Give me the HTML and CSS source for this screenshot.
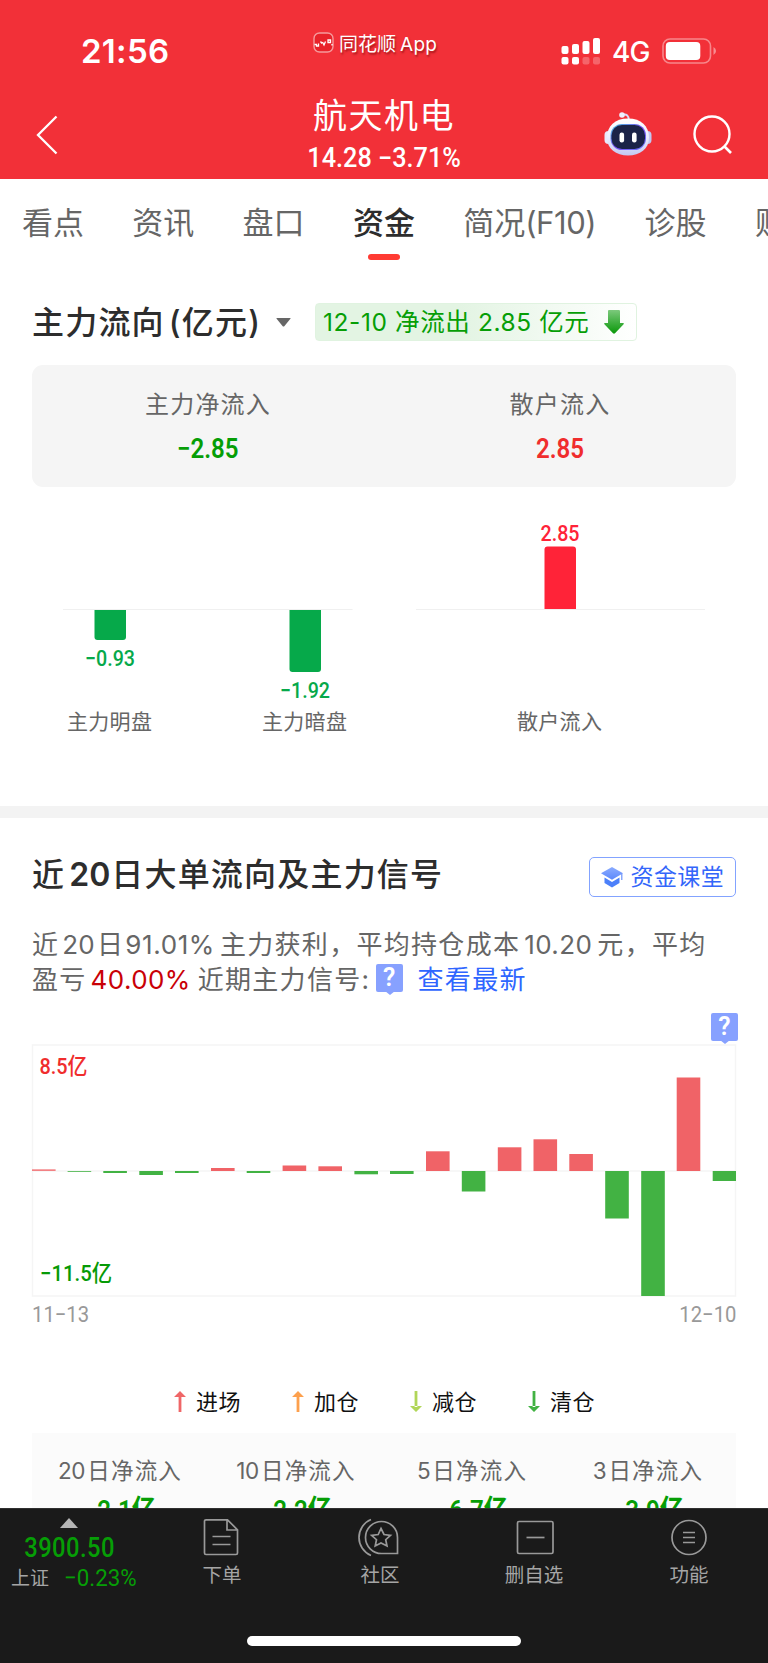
FILE: index.html
```html
<!DOCTYPE html>
<html lang="zh-CN">
<head>
<meta charset="utf-8">
<title>航天机电 资金</title>
<link rel="stylesheet" href="styles.css">
</head>
<body>
<div class="screen">
  <header class="top">
    <div class="status">
      <span class="time">21:56</span>
      <span class="brand">
        <svg class="brand-icon" viewBox="0 0 21 21"><rect x="1" y="1" width="19" height="19" rx="5.5" fill="#e8222a" stroke="#f59a9c" stroke-width="1.4"/><path d="M1.500 12.500h2v1.500h2v-2.500M7.500 9.500l1.500 2M9.500 10l1.500 3 1.500-3.500M15 8h2.500v2.500H15zM19 12v1.500" fill="none" stroke="#fff" stroke-width="1.300"/></svg>
        <span class="brand-text">同花顺</span><span class="brand-app">App</span>
      </span>
      <span class="signals">
        <svg class="bars" viewBox="0 0 39 28" fill="#fff"><rect x="0.500" y="9" width="7" height="8" rx="2"/><rect x="11" y="7" width="7" height="10" rx="2"/><rect x="21.500" y="4" width="7" height="13" rx="2"/><rect x="32" y="1" width="7" height="16" rx="2"/><rect x="0.500" y="20" width="7" height="7.500" rx="2"/><rect x="11" y="20" width="7" height="7.500" rx="2"/><rect x="21.500" y="20" width="7" height="7.500" rx="2" opacity=".25"/><rect x="32" y="20" width="7" height="7.500" rx="2" opacity=".25"/></svg>
        <span class="net">4G</span>
        <svg class="battery" viewBox="0 0 55 26"><rect x="1" y="1" width="47.500" height="24" rx="7" fill="none" stroke="#fff" stroke-opacity=".42" stroke-width="1.600"/><rect x="3.800" y="4" width="34.500" height="18" rx="4" fill="#fff"/><path d="M51.500 9q2.500 1.500 2.500 4t-2.500 4z" fill="#fff" opacity=".45"/></svg>
      </span>
    </div>
    <div class="nav">
      <svg class="back" viewBox="0 0 22 42"><path d="M20.500 2.500 2 21l18.500 18.500" fill="none" stroke="#fff" stroke-width="2.300"/></svg>
      <div class="stock">
        <h1>航天机电</h1>
        <p><span class="din quote">14.28&nbsp;−3.71%</span></p>
      </div>
      <svg class="robot" viewBox="0 0 48 46"><defs><linearGradient id="shell" x1="0" y1="0" x2="0" y2="1"><stop offset="0" stop-color="#fff"/><stop offset=".5" stop-color="#eceefd"/><stop offset="1" stop-color="#c3c7f2"/></linearGradient><linearGradient id="rim" x1="0" y1="0" x2="1" y2="1"><stop offset="0" stop-color="#46c7de"/><stop offset=".5" stop-color="#7a4df0"/><stop offset="1" stop-color="#6b7af8"/></linearGradient></defs><path d="M18 4q7-2 7 6" fill="none" stroke="#d9dcf8" stroke-width="2"/><circle cx="18" cy="4" r="2.800" fill="#eef0ff"/><rect x=".5" y="20" width="8" height="13" rx="4" fill="#e8e9fb"/><rect x="39.500" y="20" width="8" height="13" rx="4" fill="#c3c7f2"/><path d="M24 7.500C37 7.500 45 15 45 26.500S36 44.500 24 44.500 3 38 3 26.500 11 7.500 24 7.500z" fill="url(#shell)"/><rect x="6.500" y="13" width="35.500" height="26" rx="11.500" fill="url(#rim)"/><rect x="7.500" y="14" width="33.500" height="24" rx="10.500" fill="#1b2348"/><rect x="15.500" y="21.500" width="4.600" height="10" rx="2.200" fill="#fff"/><rect x="28" y="21.500" width="4.600" height="10" rx="2.200" fill="#fff"/></svg>
      <svg class="search" viewBox="0 0 40 40"><circle cx="19" cy="20" r="17.500" fill="none" stroke="#fff" stroke-width="2.400"/><path d="m31 32 7 7" stroke="#fff" stroke-width="2.600"/></svg>
    </div>
  </header>

  <nav class="tabs">
    <span>看点</span><span>资讯</span><span>盘口</span><span class="on">资金</span><span>简况<i>(F10)</i></span><span>诊股</span><span>财务</span>
  </nav>

  <section class="flow">
    <div class="flow-head">
      <h2>主力流向<span class="unit">(亿元)</span></h2>
      <svg class="caret" viewBox="0 0 15 9"><path d="M1 0h13q1 0 .4.8L8.500 8q-1 1-2 0L.6.8Q0 0 1 0z" fill="#666"/></svg>
      <div class="badge"><span class="badge-text">12-10 净流出 2.85 亿元</span>
        <svg viewBox="0 0 20 24"><defs><linearGradient id="down" x1="0" y1="0" x2="0" y2="1"><stop offset="0" stop-color="#7cc97c"/><stop offset="1" stop-color="#0a980a"/></linearGradient></defs><path d="M5 0h10q1 0 1 1v12h3q1.500 0 .6 1.200L11 23.200q-1 .9-2 0L.4 14.200Q-.5 13 1 13h3V1q0-1 1-1z" fill="url(#down)"/></svg>
      </div>
    </div>
    <div class="summary">
      <div><span class="label">主力净流入</span><span class="din value green">−2.85</span></div>
      <div><span class="label">散户流入</span><span class="din value red">2.85</span></div>
    </div>
    <svg class="split-chart" viewBox="0 0 704 319">
      <path d="M31 122.500h289.500M384 122.500h289" stroke="#f0f0f0" stroke-width="1.200"/>
      <g fill="#06a94a">
        <path d="M62.500 123h31.500v27q0 3-3 3h-25.500q-3 0-3-3z"/>
        <path d="M257.500 123h31.500v59q0 3-3 3h-25.500q-3 0-3-3z"/>
        <g class="chart-num"><text x="53" y="179" textLength="50" lengthAdjust="spacingAndGlyphs">−0.93</text><text x="248" y="211" textLength="50" lengthAdjust="spacingAndGlyphs">−1.92</text></g>
      </g>
      <g fill="#ff2338">
        <path d="M512.500 122v-59.500q0-3 3-3h25.500q3 0 3 3v59.500z"/>
        <text class="chart-num" x="508.500" y="53.500" textLength="39" lengthAdjust="spacingAndGlyphs">2.85</text>
      </g>
      <g class="chart-name" fill="#666"><text x="35" y="242">主力明盘</text><text x="230" y="242">主力暗盘</text><text x="485" y="242">散户流入</text></g>
    </svg>
  </section>

  <section class="trend">
    <div class="trend-head">
      <h2>近<b>20</b>日大单流向及主力信号</h2>
      <a class="course"><svg viewBox="0 0 22 21"><defs><linearGradient id="cap" x1="0" y1="0" x2="0" y2="1"><stop offset="0" stop-color="#8aabff"/><stop offset="1" stop-color="#5c88fb"/></linearGradient></defs><path d="M11 0 22 6.300 11 12.800 0 6.300z" fill="url(#cap)"/><path d="M3.500 10.500 11 15l7.500-4.500v5.500L11 20.500 3.500 16z" fill="#4c80fa"/><path d="M20.800 6.500v6.500" stroke="#6b93fc" stroke-width="1.200"/></svg>资金课堂</a>
    </div>
    <div class="note">
      <p>近<i class="n20">20</i>日<i class="n91">91.01%</i>主力获利，平均持仓成本<i class="n10">10.20</i>元，平均</p>
      <p>盈亏<i class="rate">40.00%</i>近期主力信号<i class="colon">:</i><span class="tip">?</span><a class="latest">查看最新</a></p>
    </div>
    <div class="tip-row"><span class="tip">?</span></div>
    <svg class="day-chart" viewBox="0 0 704 252">
      <path d="M.5 0h703v251H.5zM0 126h704" fill="none" stroke="#f5f5f5" stroke-width="1.500"/>
      <g fill="#f06367">
        <rect x="0" y="124.300" width="23.600" height="1.700" opacity=".8"/><rect x="179" y="123" width="23.600" height="3"/><rect x="250.600" y="120.500" width="23.600" height="5.500"/><rect x="286.400" y="121.300" width="23.600" height="4.700"/><rect x="394" y="106.300" width="23.600" height="19.700"/><rect x="465.800" y="102.300" width="23.600" height="23.700"/><rect x="501.500" y="94.300" width="23.600" height="31.700"/><rect x="537.300" y="109" width="23.600" height="17"/><rect x="644.700" y="32.500" width="23.600" height="93.500"/>
      </g>
      <g fill="#42b243">
        <rect x="35.600" y="126" width="23.600" height="1" opacity=".8"/><rect x="71.300" y="126" width="23.600" height="2"/><rect x="107.300" y="126" width="23.600" height="4"/><rect x="143" y="126" width="23.600" height="2"/><rect x="214.700" y="126" width="23.600" height="2"/><rect x="322.400" y="126" width="23.600" height="3.300"/><rect x="358" y="126" width="23.600" height="3"/><rect x="429.800" y="126" width="23.600" height="20.500"/><rect x="573.200" y="126" width="23.600" height="47.500"/><rect x="609.200" y="126" width="23.600" height="125"/><rect x="680.700" y="126" width="23.300" height="10"/>
      </g>
      <text class="axis" fill="#f02d2d" x="7.500" y="29" textLength="48" lengthAdjust="spacingAndGlyphs">8.5亿</text>
      <text class="axis" fill="#069a06" x="8" y="235.500" textLength="72" lengthAdjust="spacingAndGlyphs">−11.5亿</text>
    </svg>
    <div class="dates"><span class="din">11−13</span><span class="din end">12−10</span></div>
    <div class="legend">
      <span><svg viewBox="0 0 12 21" fill="#ef6667"><path d="M6 0l6 6H0zM4.600 5h2.800v16H4.600z"/></svg>进场</span>
      <span><svg viewBox="0 0 12 21" fill="#fda04d"><path d="M6 0l6 6H0zM4.600 5h2.800v16H4.600z"/></svg>加仓</span>
      <span><svg viewBox="0 0 12 21" fill="#b1d659"><path d="M6 21l6-6H0zM4.600 0h2.800v16H4.600z"/></svg>减仓</span>
      <span><svg viewBox="0 0 12 21" fill="#42b243"><path d="M6 21l6-6H0zM4.600 0h2.800v16H4.600z"/></svg>清仓</span>
    </div>
    <div class="periods">
      <div><span><i>20</i>日净流入</span><b class="din">−2.1亿</b></div>
      <div><span><i>10</i>日净流入</span><b class="din">−2.2亿</b></div>
      <div><span><i>5</i>日净流入</span><b class="din">−6.7亿</b></div>
      <div><span><i>3</i>日净流入</span><b class="din">−3.9亿</b></div>
    </div>
  </section>

  <footer class="dock">
    <div class="dock-row">
      <div class="index">
        <svg class="up" viewBox="0 0 18 10"><path d="M9 0l9 10H0z" fill="#b5b5b5"/></svg>
        <span class="din points">3900.50</span>
        <span class="index-line"><span>上证</span><span class="din pct">−0.23%</span></span>
      </div>
      <div class="item"><svg viewBox="0 0 40 40"><path d="M4 2.800h21.500l10 10V36q0 1.500-1.500 1.500H4Q2.500 37.500 2.500 36V4.300Q2.500 2.800 4 2.800zM25 3v10h10.500M10.500 19.500h18M10.500 27.500h18"/></svg>下单</div>
      <div class="item"><svg viewBox="0 0 40 40"><path d="M37.500 36.500H21.500A16 16 0 1 1 37.500 20.500zM11 2.500A19.500 19.500 0 0 0 11 38.500M21 11.500l3 6 6.500.8-4.800 4.400 1.300 6.300-6-3.100-5.800 3.100 1.300-6.300-4.900-4.400 6.600-.8z"/></svg>社区</div>
      <div class="item"><svg viewBox="0 0 40 40"><rect x="3.500" y="4.500" width="35.500" height="32" rx="1.500"/><path d="M12.500 20.500h18"/></svg>删自选</div>
      <div class="item"><svg viewBox="0 0 40 40"><circle cx="20" cy="20.500" r="17"/><path d="M14 15.500h12M14 20.500h12M14 25.500h12"/></svg>功能</div>
    </div>
    <div class="home"></div>
  </footer>
</div>
</body>
</html>
```
FILE: styles.css
```css
* { box-sizing: border-box; margin: 0; padding: 0; }
body { background: #fff; font-family: Inter, "Noto Sans CJK SC", sans-serif; color: #666; }
i { font-style: normal; }
h1, h2 { font-weight: 500; }
svg { display: block; flex: none; overflow: visible; }

.screen { width: 768px; height: 1663px; overflow: hidden; display: flex; flex-direction: column; }
.din { display: inline-block; font-family: Roboto, "Noto Sans CJK SC", sans-serif; font-weight: 500; transform: scaleX(.86); white-space: nowrap; }
.green { color: #069e06; }
.red { color: #f02d2d; }

.top { height: 179px; flex: none; background: #f23038; color: #fff; }
.status { height: 90px; display: flex; }
.time { margin: 31px 0 0 81px; width: 232px; font-size: 33px; line-height: 40px; font-weight: 600; letter-spacing: .3px; }
.brand { display: flex; width: 247px; padding-top: 32px; font-size: 19px; line-height: 26px; text-shadow: 1px 2px 2px rgba(100, 0, 0, .55); }
.brand-icon { width: 21px; height: 21px; }
.brand-text { margin-left: 5px; }
.brand-app { margin-left: 4px; letter-spacing: .3px; }
.signals { display: flex; }
.bars { width: 39px; height: 28px; margin-top: 37px; margin-left: 1px; }
.net { margin: 34px 0 0 12px; width: 50px; font-size: 28px; line-height: 36px; font-weight: 500; letter-spacing: -.8px; }
.battery { width: 55px; height: 26px; margin-top: 38px; }
.nav { height: 89px; display: flex; }
.back { width: 22px; height: 42px; margin: 24px 0 0 36px; }
.stock { width: 158px; margin-left: 247px; text-align: center; white-space: nowrap; }
.stock h1 { font-size: 34px; line-height: 44px; height: 52px; padding-top: 4px; font-weight: 400; letter-spacing: 1.500px; }
.quote { font-size: 27px; line-height: 32px; transform: scaleX(.935); }
.stock p { display: flex; justify-content: center; }
.robot { width: 48px; height: 46px; margin: 21px 0 0 141px; }
.search { width: 40px; height: 40px; margin: 24px 0 0 41px; }

.tabs { height: 100px; flex: none; display: flex; gap: 48.300px; padding: 21px 0 0 22px; font-size: 31px; line-height: 46px; white-space: nowrap; }
.tabs i { letter-spacing: -.4px; }
.tabs .on { color: #2d2d2d; font-weight: 500; display: flex; flex-direction: column; align-items: center; }
.on::after { content: ""; width: 32px; height: 6px; margin-top: 8px; border-radius: 3px; background: #ff3b33; }

.flow { height: 527px; flex: none; padding: 24px 32px 0; }
.flow-head { display: flex; height: 62px; }
h2 { font-size: 32px; line-height: 40px; color: #2d2d2d; letter-spacing: 1.200px; white-space: nowrap; }
.flow-head h2 { width: 244px; }
.unit { margin-left: 4px; }
.caret { width: 15px; height: 9px; margin-top: 15px; }
.badge { display: flex; margin-left: 24px; width: 322px; height: 38px; border: 1px solid #e0f3e0; border-radius: 4px; background: linear-gradient(90deg, #e3f4e3 45%, #fff); color: #069e06; font-size: 24.500px; line-height: 36px; padding-left: 7px; letter-spacing: .6px; }
.badge-text { width: 281px; white-space: nowrap; }
.badge svg { width: 20px; height: 24px; margin-top: 6px; }
.summary { display: flex; height: 122px; border-radius: 11px; background: #f5f5f5; }
.summary div { width: 50%; display: flex; flex-direction: column; align-items: center; padding-top: 22px; }
.label { font-size: 24px; line-height: 36px; letter-spacing: 1.200px; }
.value { font-size: 28px; line-height: 32px; font-weight: 600; margin-top: 10px; }
.split-chart { width: 704px; height: 319px; }
.chart-num { font: 500 22.500px Roboto, sans-serif; }
.chart-name { font: 21px "Noto Sans CJK SC", sans-serif; letter-spacing: .3px; }

.trend { height: 702px; flex: none; overflow: hidden; padding: 39px 32px 0; border-top: 12px solid #f3f3f3; }
.trend-head { display: flex; justify-content: space-between; height: 69px; }
.trend-head h2 { line-height: 36px; letter-spacing: 1.200px; }
.trend-head b { font-weight: 600; letter-spacing: 0; margin: 0 1px 0 4px; }
.course { display: flex; width: 147px; height: 40px; border: 1.500px solid #83a3ff; border-radius: 5px; color: #3366fa; font-size: 23px; line-height: 38px; padding-left: 11px; white-space: nowrap; letter-spacing: .4px; }
.course svg { width: 22px; height: 21px; margin: 9px 7.500px 0 0; }
.note { height: 87px; padding-top: 1px; font-size: 26px; line-height: 35px; letter-spacing: 1.300px; white-space: nowrap; }
.note p { display: flex; }
.n20 { margin: 0 2px 0 3px; letter-spacing: .2px; }
.n91 { letter-spacing: .6px; margin: 0 5px 0 1px; }
.n10 { margin: 0 5px 0 4px; letter-spacing: .4px; }
.rate { color: #c90006; margin: 0 7px 0 4px; letter-spacing: .4px; }
.colon { width: 14px; }
.tip { width: 27px; height: 28px; border-radius: 2px; background: #87a1ff; color: #fff; font: 600 25px/28px Roboto, sans-serif; letter-spacing: 0; text-align: center; position: relative; }
.tip::after { content: ""; position: absolute; left: 9px; top: 27px; border: 5px solid transparent; border-top: 4px solid #87a1ff; border-bottom: 0; }
.note .tip { margin-top: 2px; }
.latest { color: #2f66ff; margin-left: 15px; }
.tip-row { display: flex; justify-content: flex-end; height: 32px; margin-right: -2px; }
.day-chart { width: 704px; height: 252px; }
.axis { font: 500 22.500px Roboto, "Noto Sans CJK SC", sans-serif; }
.dates { display: flex; justify-content: space-between; height: 84px; padding-top: 4px; color: #999; font-size: 22.500px; line-height: 27px; }
.dates .din { transform-origin: 0 50%; font-weight: 400; transform: scaleX(.9); }
.dates .end { transform-origin: 100% 50%; }
.legend { display: flex; height: 52px; padding-left: 142px; color: #111; font-size: 22px; line-height: 42px; }
.legend span { display: flex; width: 118px; letter-spacing: .5px; }
.legend svg { width: 12px; height: 21px; margin: 10px 10px 0 0; }
.periods { display: flex; background: #fbfbfb; height: 100px; }
.periods div { width: 176px; display: flex; flex-direction: column; align-items: center; padding-top: 20px; }
.periods span { font-size: 22.500px; line-height: 36px; letter-spacing: 1.200px; white-space: nowrap; }
.periods i { margin-right: 2px; letter-spacing: -.3px; }
.periods b { color: #069e06; font-size: 28px; line-height: 32px; margin-top: 6px; font-weight: 600; }

.dock { height: 156px; flex: none; background: #1a1a1a; color: #a5a5a5; border-top: 1px solid #303030; }
.dock-row { height: 127px; display: grid; grid-template-columns: 138px 168px 148px 160px 150px; }
.index { display: flex; flex-direction: column; align-items: center; padding-top: 9px; }
.up { width: 18px; height: 10px; }
.points { font-size: 27px; line-height: 32px; margin: 4px 0 0 2px; color: #069e06; transform: scaleX(.88); letter-spacing: .5px; }
.index-line { width: 138px; display: flex; padding-left: 11px; font-size: 19px; line-height: 28px; white-space: nowrap; }
.index-line span:first-child { padding-top: 1px; }
.pct { color: #069e06; font-size: 24px; margin-left: 15px; transform: scaleX(.93); transform-origin: 0 50%; font-weight: 400; }
.item { display: flex; flex-direction: column; align-items: center; padding-top: 8px; font-size: 19.500px; line-height: 28px; }
.item svg { width: 40px; height: 40px; margin-bottom: 4px; fill: none; stroke: #999; stroke-width: 1.700; }
.home { width: 274px; height: 10px; border-radius: 5px; background: #fff; margin-left: 247px; }
```
